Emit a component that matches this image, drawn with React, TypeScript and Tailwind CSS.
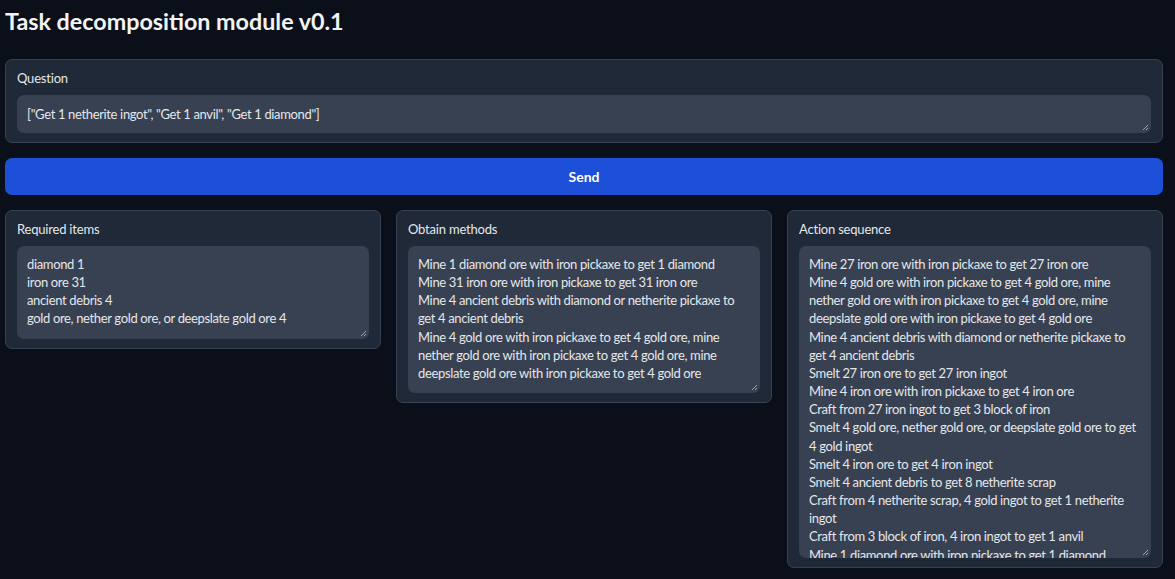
import React from "react";

const required = [
  "diamond 1",
  "iron ore 31",
  "ancient debris 4",
  "gold ore, nether gold ore, or deepslate gold ore 4",
];

const methods = [
  "Mine 1 diamond ore with iron pickaxe to get 1 diamond",
  "Mine 31 iron ore with iron pickaxe to get 31 iron ore",
  "Mine 4 ancient debris with diamond or netherite pickaxe to",
  "get 4 ancient debris",
  "Mine 4 gold ore with iron pickaxe to get 4 gold ore, mine",
  "nether gold ore with iron pickaxe to get 4 gold ore, mine",
  "deepslate gold ore with iron pickaxe to get 4 gold ore",
];

const actions = [
  "Mine 27 iron ore with iron pickaxe to get 27 iron ore",
  "Mine 4 gold ore with iron pickaxe to get 4 gold ore, mine",
  "nether gold ore with iron pickaxe to get 4 gold ore, mine",
  "deepslate gold ore with iron pickaxe to get 4 gold ore",
  "Mine 4 ancient debris with diamond or netherite pickaxe to",
  "get 4 ancient debris",
  "Smelt 27 iron ore to get 27 iron ingot",
  "Mine 4 iron ore with iron pickaxe to get 4 iron ore",
  "Craft from 27 iron ingot to get 3 block of iron",
  "Smelt 4 gold ore, nether gold ore, or deepslate gold ore to get",
  "4 gold ingot",
  "Smelt 4 iron ore to get 4 iron ingot",
  "Smelt 4 ancient debris to get 8 netherite scrap",
  "Craft from 4 netherite scrap, 4 gold ingot to get 1 netherite",
  "ingot",
  "Craft from 3 block of iron, 4 iron ingot to get 1 anvil",
  "Mine 1 diamond ore with iron pickaxe to get 1 diamond",
];

function Grip() {
  return (
    <svg className="absolute right-[2px] bottom-[2px]" width="7" height="7" viewBox="0 0 7 7">
      <path d="M6 1 L1 6 M6 4 L4 6" stroke="#9ca3af" strokeWidth="1" />
    </svg>
  );
}

function Box({ lines, h }: { lines: string[]; h?: string }) {
  return (
    <div
      className={`relative overflow-hidden rounded-[7px] bg-[#374151] pl-[10px] pr-[6px] pt-[9px] pb-[11px] text-[13px] leading-[18.15px] tracking-[-0.35px] text-[#e5e7eb] ${h ?? ""}`}
    >
      {lines.map((l, i) => (
        <div key={i} className="whitespace-pre">
          {l}
        </div>
      ))}
      <Grip />
    </div>
  );
}

function Panel({ label, children }: { label: string; children: React.ReactNode }) {
  return (
    <div className="rounded-[7px] border border-[#374151] bg-[#1f2937] px-[11px] pt-[10px] pb-[9px]">
      <div className="mb-[9px] text-[13px] leading-[16px] tracking-[-0.2px] text-[#e5e7eb]">{label}</div>
      {children}
    </div>
  );
}

export default function App() {
  return (
    <div
      className="min-h-[579px] bg-[#0b0f19] px-[5px] pt-[7px]"
      style={{ fontFamily: "Lato, 'Noto Sans', sans-serif" }}
    >
      <h1 className="text-[23.3px] font-bold leading-[28px] text-[#f3f4f6]">Task decomposition module v0.1</h1>
      <div className="mt-[24px] w-[1158px]">
        <Panel label="Question">
          <div className="relative flex h-[38px] items-center rounded-[7px] bg-[#374151] px-[10px] text-[13px] leading-[18px] tracking-[-0.35px] text-[#e5e7eb]">
            ["Get 1 netherite ingot", "Get 1 anvil", "Get 1 diamond"]
            <Grip />
          </div>
        </Panel>
        <button className="mt-[15px] flex h-[37px] w-full items-center justify-center rounded-[7px] bg-[#1e4fd8] text-[14px] font-bold text-white">
          Send
        </button>
        <div className="mt-[15px] flex items-start gap-[15px]">
          <div className="w-[376px]">
            <Panel label="Required items">
              <Box lines={required} />
            </Panel>
          </div>
          <div className="w-[376px]">
            <Panel label="Obtain methods">
              <Box lines={methods} />
            </Panel>
          </div>
          <div className="w-[376px]">
            <Panel label="Action sequence">
              <Box lines={actions} h="h-[312px]" />
            </Panel>
          </div>
        </div>
      </div>
    </div>
  );
}
